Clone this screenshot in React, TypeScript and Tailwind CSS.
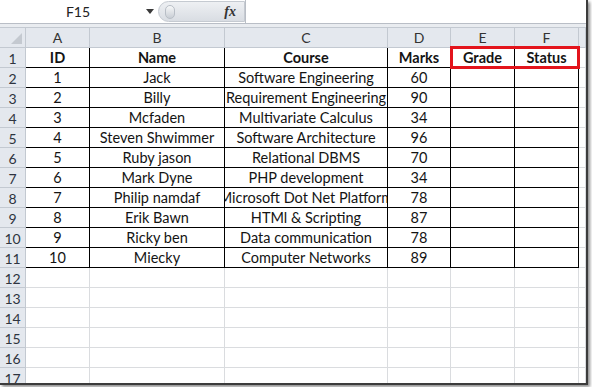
import React from 'react';

const font = { fontFamily: 'Lato, "Open Sans", sans-serif' };

const rows = [
  ['1', 'Jack', 'Software Engineering', '60'],
  ['2', 'Billy', 'Requirement Engineering', '90'],
  ['3', 'Mcfaden', 'Multivariate Calculus', '34'],
  ['4', 'Steven Shwimmer', 'Software Architecture', '96'],
  ['5', 'Ruby jason', 'Relational DBMS', '70'],
  ['6', 'Mark Dyne', 'PHP development', '34'],
  ['7', 'Philip namdaf', 'Microsoft Dot Net Platform', '78'],
  ['8', 'Erik Bawn', 'HTMl & Scripting', '87'],
  ['9', 'Ricky ben', 'Data communication', '78'],
  ['10', 'Miecky', 'Computer Networks', '89'],
];

const gridCols = 'grid grid-cols-[26px_64px_135px_163px_63px_64px_64px_1fr]';

const RowHead: React.FC<{ n: number }> = ({ n }) => (
  <div className="h-[20px] flex items-center justify-center pt-[2px] bg-[#e4e8ee] border-r border-b border-[#c3c9d1] text-[14px] text-[#2e3440] leading-none">
    {n}
  </div>
);

const Cell: React.FC<{ children?: React.ReactNode; bold?: boolean; dark?: boolean }> = ({ children, bold, dark }) => (
  <div
    className={`h-[20px] flex items-center justify-center pt-[2px] overflow-hidden whitespace-nowrap border-r border-b text-[14.5px] text-[#141414] leading-none ${
      dark ? 'border-black' : 'border-[#dadcdf]'
    } ${bold ? 'font-bold' : ''}`}
  >
    {children}
  </div>
);

export default function App() {
  return (
    <div className="w-[592px] h-[387px] bg-white" style={font}>
      <div className="relative w-[588px] h-[385px] border-r-2 border-b-2 border-[#3c3c3c] overflow-hidden bg-white shadow-[2px_2px_3px_rgba(0,0,0,0.45)]">
        {/* formula bar */}
        <div className="h-[24px] flex border-b border-[#b9bec6] bg-white">
          <div className="w-[158px] flex items-center">
            <span className="flex-1 text-center text-[14px] text-[#222] pl-[10px]">F15</span>
            <svg width="8" height="5" viewBox="0 0 8 5" className="mr-[4px]">
              <path d="M0 0h8L4 5z" fill="#3a3a3a" />
            </svg>
          </div>
          <div className="w-[87px] flex items-center justify-between rounded-l-full bg-gradient-to-b from-[#eef0f3] to-[#d9dde3] border border-[#c5cad1] my-[1px] pr-[8px]">
            <div className="ml-[6px] w-[10px] h-[14px] rounded-full bg-gradient-to-b from-[#f7f8f9] to-[#c9ced5] border border-[#b8bec6]" />
            <span className="text-[14px] italic font-bold text-[#333]" style={{ fontFamily: '"Liberation Serif", serif' }}>
              fx
            </span>
          </div>
          <div className="flex-1 border-l border-[#b9bec6]" />
        </div>
        <div className="h-[4px] bg-[#e9ecf0] border-b border-[#c3c9d1]" />

        {/* column headers */}
        <div className={gridCols}>
          <div className="h-[20px] bg-[#e4e8ee] border-r border-b border-[#c3c9d1] flex items-end justify-end p-[3px]">
            <svg width="11" height="11" viewBox="0 0 11 11">
              <path d="M11 0v11H0z" fill="#c4c9d0" />
            </svg>
          </div>
          {['A', 'B', 'C', 'D', 'E', 'F', ''].map((c, i) => (
            <div
              key={i}
              className="h-[20px] flex items-center justify-center pt-[1px] bg-[#e4e8ee] border-r border-b border-[#c3c9d1] text-[14px] text-[#333] leading-none"
            >
              {c}
            </div>
          ))}
        </div>

        {/* sheet body */}
        <div className={gridCols}>
          <RowHead n={1} />
          {['ID', 'Name', 'Course', 'Marks', 'Grade', 'Status'].map((h) => (
            <Cell key={h} bold dark>
              {h}
            </Cell>
          ))}
          <Cell />
          {rows.map((r, i) => (
            <React.Fragment key={i}>
              <RowHead n={i + 2} />
              {r.map((v, j) => (
                <Cell key={j} dark>
                  {v}
                </Cell>
              ))}
              <Cell dark />
              <Cell dark />
              <Cell />
            </React.Fragment>
          ))}
          {[12, 13, 14, 15, 16, 17].map((n) => (
            <React.Fragment key={n}>
              <RowHead n={n} />
              {[0, 1, 2, 3, 4, 5, 6].map((j) => (
                <Cell key={j} />
              ))}
            </React.Fragment>
          ))}
        </div>

        {/* highlight around Grade / Status */}
        <div className="absolute left-[450px] top-[46px] w-[130px] h-[23px] border-[3px] border-[#e3141c]" />
      </div>
    </div>
  );
}
